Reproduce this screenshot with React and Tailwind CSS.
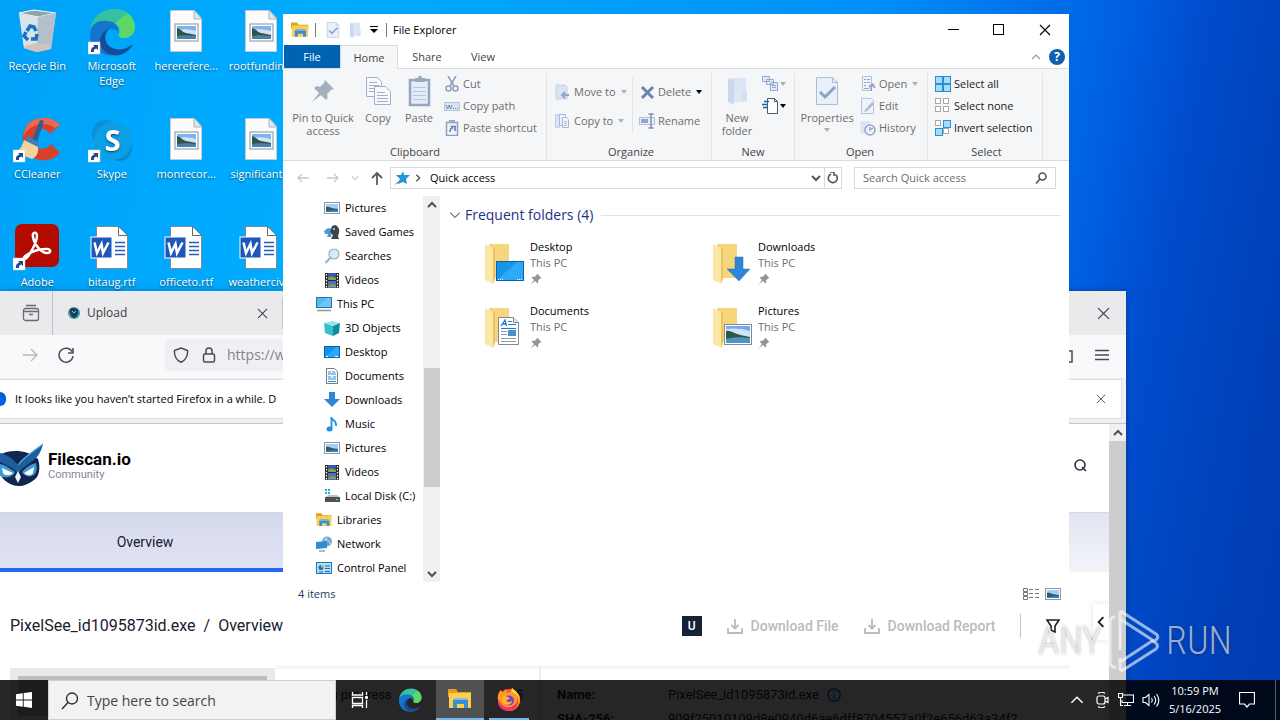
import React from 'react';
import clsx from 'clsx';

/* ---------- small icons ---------- */

const ImagePage = () => (
  <svg viewBox="0 0 48 48" className="h-12 w-12" aria-hidden="true">
    <path d="M8.500 2.500h24l7 8v33h-31z" fill="#fcfcfc" stroke="#c2ccd4" />
    <path d="M32 2v9h8z" fill="#dfe7ec" stroke="#a8b4bd" />
    <rect x="13" y="16" width="23" height="17" fill="#fff" stroke="#7d8f9e" />
    <rect x="15" y="18" width="19" height="13" fill="#7fb2ee" />
    <path d="M15 22c5-1 12-1 19 1v5H15z" fill="#cfe3f5" />
    <path d="M15 20c4 1 5 4 9 5s7 1 10 2v2H15z" fill="#2f5547" />
    <path d="M15 28c6-1 12-1 19 0v3H15z" fill="#4a80a8" />
  </svg>
);

const WordPage = () => (
  <svg viewBox="0 0 48 48" className="h-12 w-12" aria-hidden="true">
    <path d="M8.500 2.500h22l9 9v33h-31z" fill="#fff" stroke="#7d8a96" />
    <path d="M30.500 2.500v9h9" fill="none" stroke="#5d6a76" />
    <path d="M27 18.500h10M27 22.500h10M27 26.500h10M27 30.500h10" stroke="#2b5eb0" strokeWidth="1.500" />
    <rect x="3" y="13" width="21" height="21" fill="#1e57b8" stroke="#fff" />
    <path d="M6.500 18.500l2.500 10.500 4.500-9 1.500 9 5.500-10.500" fill="none" stroke="#fff" strokeWidth="2.500" />
  </svg>
);

const ShortcutArrow = () => (
  <g>
    <rect x="0" y="34" width="12" height="12" fill="#fff" stroke="#c9d4dc" strokeWidth="0.500" />
    <path d="M3 44c-.500-3 1-5 3.500-5.500L5 37h5v5l-1.500-1.500C6 41 5.500 42.500 6 44z" fill="#25478f" />
  </g>
);

const RecycleBin = () => (
  <svg viewBox="0 0 48 48" className="h-12 w-12" aria-hidden="true">
    <path d="M6 5L21 2l22 3-5 36-14 3-13-4z" fill="#c9d3da" />
    <path d="M6 5l19 4 18-4-22-3z" fill="#8fa3ae" stroke="#f4f7f9" strokeWidth="1.200" />
    <path d="M6 5l19 4-1 35-13-4z" fill="#dbe3e8" />
    <path d="M25 9l18-4-5 36-14 3z" fill="#b4c0c9" />
    <path d="M12 38l12-3 14 3-1 3-13 3-13-4z" fill="#d3c3b9" />
    <g fill="none" stroke="#1773c9" strokeWidth="3.500">
      <path d="M14 23l3-5 4 1 2 4" />
      <path d="M24 26l-1 5h-5" />
      <path d="M15 32l-4-4 2-4" />
    </g>
  </svg>
);

const EdgeShape = () => (
  <g>
    <path d="M2 24C3 10 13 1 26 1c12 0 21 8 21 18 0 7-5 11-11 11-4 0-6-2-5-4 2-8-3-12-10-12C12 14 4 17 2 24z" fill="#35c1a0" />
    <path d="M26 1c12 0 21 8 21 18 0 7-5 11-11 11-4 0-6-2-5-4 2-5 0-8-4-10 4-5 8-8 13-10-4-3-9-5-14-5z" fill="#6bdc58" opacity=".75" />
    <path d="M2 24C4 14 12 12 19 13c7 0 12 5 11 11-2-3-5-4-8-3-7 2-8 11-3 17 3 4 7 8 12 9-17 3-30-7-29-23z" fill="#1275ce" />
    <path d="M22 21c-5 2-7 11-1 17 6 5 15 5 24-2-4 8-11 12-19 11-10-1-15-9-14-16 1-5 5-9 10-10z" fill="#164c95" />
  </g>
);

const EdgeIcon = ({ shortcut, className }) => (
  <svg viewBox="0 0 48 48" className={className} aria-hidden="true">
    <EdgeShape />
    {shortcut && <ShortcutArrow />}
  </svg>
);

const CCleaner = () => (
  <svg viewBox="0 0 48 48" className="h-12 w-12" aria-hidden="true">
    <path d="M47 9C40 0 24 0 16 7 8 15 8 30 15 38c8 8 23 9 32-1l-9-9c-4 6-12 6-15 1-4-5-3-12 2-15 4-2 9-1 12 4z" fill="#d8402c" />
    <path d="M47 9C40 0 24 0 16 7c-3 3-5 8-5 12 6-10 20-15 31-7z" fill="#ea6a50" />
    <path d="M27 4l4 1-7 21-5-2z" fill="#2a5f98" />
    <path d="M14 20l12 6-2 6-12-5z" fill="#3b7dbd" />
    <path d="M11 24l14 7c1 6-2 10-6 12L1 36c6-1 8-6 10-12z" fill="#f2d59a" />
    <ShortcutArrow />
  </svg>
);

const Skype = () => (
  <svg viewBox="0 0 48 48" className="h-12 w-12" aria-hidden="true">
    <circle cx="18" cy="18" r="14" fill="#0b8fdc" />
    <circle cx="31" cy="32" r="13" fill="#0a86d2" />
    <circle cx="25" cy="25" r="19" fill="#0c9fe6" />
    <text x="24.500" y="35" textAnchor="middle" fontFamily="Open Sans" fontWeight="700" fontSize="29" fill="#fff">S</text>
    <ShortcutArrow />
  </svg>
);

const Adobe = () => (
  <svg viewBox="0 0 48 48" className="h-12 w-12" aria-hidden="true">
    <rect x="2" y="0" width="44" height="43" rx="7" fill="#b30b00" />
    <path
      d="M12 32c-3 3 0 5 4-1 5-8 8-15 8-19 0-5-5-4-4 1 1 7 8 16 14 16 5 0 4-5-2-4-7 0-14 3-20 7z"
      fill="none" stroke="#fff" strokeWidth="2.400"
    />
    <ShortcutArrow />
  </svg>
);

const PictureIcon = () => (
  <svg viewBox="0 0 16 16" className="h-4 w-4" aria-hidden="true">
    <rect x=".500" y="2.500" width="15" height="11" fill="#fff" stroke="#8b98a3" />
    <rect x="2" y="4" width="12" height="8" fill="#a4cdf5" />
    <path d="M2 7c3-1 5 2 12 2v3H2z" fill="#2f5a6a" />
    <path d="M2 11c4-1 8-1 12-1v2H2z" fill="#3b7cb8" />
  </svg>
);

const GamesIcon = () => (
  <svg viewBox="0 0 16 16" className="h-4 w-4" aria-hidden="true">
    <path d="M0 7l4-3c3 0 4 2 4 4l-1 5H3l1-3H1z" fill="#4c9bd6" />
    <path d="M8 2l3-1c3 1 5 4 4 8l-1 3 1 3H7l2-4-3-3z" fill="#3f4448" />
    <circle cx="10" cy="5" r="1" fill="#d6dde2" />
  </svg>
);

const SearchesIcon = () => (
  <svg viewBox="0 0 16 16" className="h-4 w-4" aria-hidden="true">
    <circle cx="10" cy="6" r="5" fill="#d8ecf8" stroke="#8fb0c4" strokeWidth="1.200" />
    <path d="M6.500 9.500L1.500 15" stroke="#a9b0b6" strokeWidth="2" />
  </svg>
);

const VideosIcon = () => (
  <svg viewBox="0 0 16 16" className="h-4 w-4" aria-hidden="true">
    <rect x="1" y="1" width="14" height="15" fill="#2b2b2b" />
    <rect x="4" y="1" width="8" height="7" fill="#3457b5" />
    <rect x="4" y="9" width="8" height="7" fill="#4a6fd0" />
    <path d="M4 6l3-2 5 2v2H4zM4 14l4-2 4 1v2H4z" fill="#8f9a3c" />
    <path d="M2.500 2v14M13.500 2v14" stroke="#fff" strokeWidth="1.200" strokeDasharray="1.500 1.500" />
  </svg>
);

const PcIcon = () => (
  <svg viewBox="0 0 16 16" className="h-4 w-4" aria-hidden="true">
    <rect x=".500" y="1.500" width="15" height="10" fill="#4fb9f2" stroke="#2d6f9e" />
    <path d="M1 11L11 2h4v9z" fill="#7fd0fa" opacity=".6" />
    <path d="M1 14.500h14" stroke="#8a98a3" strokeWidth="1.500" />
  </svg>
);

const ObjectsIcon = () => (
  <svg viewBox="0 0 16 16" className="h-4 w-4" aria-hidden="true">
    <path d="M0 3l8-2 8 2-7 3z" fill="#9be6ee" />
    <path d="M0 3l9 3v10l-8-3z" fill="#35bfd0" />
    <path d="M9 6l7-3-1 10-6 3z" fill="#138a9e" />
  </svg>
);

const DesktopIcon = () => (
  <svg viewBox="0 0 16 16" className="h-4 w-4" aria-hidden="true">
    <rect x=".500" y="2.500" width="15" height="11" fill="#1492e8" stroke="#0a64ad" />
    <path d="M1 13L12 3h3v10z" fill="#2aa9f8" />
    <path d="M2 12.500h2M11 12.500h3" stroke="#fff" />
  </svg>
);

const DocIcon = () => (
  <svg viewBox="0 0 16 16" className="h-4 w-4" aria-hidden="true">
    <path d="M2.500.500h8l3 3v12h-11z" fill="#fff" stroke="#6f7d88" />
    <path d="M4 4h3M8 4h3M4 6h8M4 9h3M8.500 9H12M4 11h8M4 13.500h8" stroke="#2b87c8" />
  </svg>
);

const DownIcon = () => (
  <svg viewBox="0 0 16 16" className="h-4 w-4" aria-hidden="true">
    <path d="M5 0h6v7h5l-8 8-8-8h5z" fill="#2f87d6" />
  </svg>
);

const MusicIcon = () => (
  <svg viewBox="0 0 16 16" className="h-4 w-4" aria-hidden="true">
    <path d="M7 1c0 3 6 3 5 9M7.500 1v12" fill="none" stroke="#1a94e0" strokeWidth="1.800" />
    <ellipse cx="5.500" cy="13" rx="3" ry="2.500" fill="#1a94e0" />
  </svg>
);

const DiskIcon = () => (
  <svg viewBox="0 0 16 16" className="h-4 w-4" aria-hidden="true">
    <path d="M1 1h2v2H1zM4 1h2v2H4zM1 4h2v2H1zM4 4h2v2H4z" fill="#19b3d6" />
    <path d="M2 9l2-2h9l2 2z" fill="#b9c0c4" />
    <rect x="1" y="9" width="15" height="5" fill="#4b5358" />
    <rect x="12" y="11" width="2" height="1" fill="#5fe36a" />
  </svg>
);

const ExplorerIcon = ({ className }) => (
  <svg viewBox="0 0 24 24" className={className} aria-hidden="true">
    <path d="M0 2h8l2 3h13v5H0z" fill="#e2a021" />
    <path d="M1 6h22v15H1z" fill="#fdcf4d" />
    <path d="M5 21v-8l2-2h11l2 2v8h-4v-4H9v4z" fill="#3b8ed0" />
    <path d="M5 13l2-2h11l2 2z" fill="#7fc0ea" />
  </svg>
);

const NetworkIcon = () => (
  <svg viewBox="0 0 16 16" className="h-4 w-4" aria-hidden="true">
    <circle cx="11" cy="5.500" r="5" fill="#6fa9cd" />
    <path d="M8 3c3 0 6 3 7 5M11 1c-2 3-2 7 0 10" stroke="#d5e9f5" fill="none" strokeWidth=".800" />
    <path d="M0 6l11-1v7L0 13z" fill="#2e8fce" />
    <path d="M3 15h6" stroke="#89a4b5" strokeWidth="1.500" />
  </svg>
);

const ControlIcon = () => (
  <svg viewBox="0 0 16 16" className="h-4 w-4" aria-hidden="true">
    <rect x=".500" y="2.500" width="15" height="11" fill="#aee0f8" stroke="#2678b5" />
    <circle cx="5" cy="7.500" r="2.500" fill="#1f6db0" />
    <path d="M5 7.500V5a2.500 2.500 0 0 1 2.500 2.500z" fill="#f4b93b" />
    <path d="M9 6h5M9 8.500h5M3 12h4M9 11.500h5" stroke="#1f6db0" />
  </svg>
);

const PinIcon = ({ className }) => (
  <svg viewBox="0 0 24 24" className={className} aria-hidden="true">
    <path d="M14 1l9 9-3 1-4 4c1 2 1 4-1 6l-5-5-9 7 7-9-5-5c2-2 4-2 6-1l4-4z" fill="currentColor" />
  </svg>
);

/* ribbon drawings */
const CopyIcon = () => (
  <svg viewBox="0 0 32 32" className="h-8 w-8" aria-hidden="true">
    <g fill="#f7f9fd" stroke="#a3afca">
      <path d="M4.500 2.500h11l4 4v15h-15z" />
      <path d="M7 7.500h8M7 10.500h10M7 13.500h10M7 16.500h10" />
      <path d="M12.500 11.500h11l5 5v13h-16z" />
      <path d="M15 17.500h8M15 20.500h11M15 23.500h11M15 26.500h11" />
    </g>
  </svg>
);

const PasteIcon = () => (
  <svg viewBox="0 0 32 32" className="h-8 w-8" aria-hidden="true">
    <rect x="7" y="5" width="19" height="25" fill="#e6ecf7" stroke="#94a5c4" strokeWidth="2.500" />
    <path d="M12 3h3c0-3 4-3 4 0h3v4H12z" fill="#9ba9bd" />
    <path d="M10 12.500h13M10 16.500h13M10 20.500h13M10 24.500h13" stroke="#b5c3dd" />
  </svg>
);

const CheckPage = ({ className }) => (
  <svg viewBox="0 0 32 32" className={className} aria-hidden="true">
    <path d="M5.500 2.500h16l5 5v22h-21z" fill="#eaf0fa" stroke="#afbcd8" />
    <path d="M21.500 2.500v5h5" fill="none" stroke="#afbcd8" />
    <path d="M9 17l5 5 10-10" fill="none" stroke="#8ca3cb" strokeWidth="3" />
  </svg>
);

const FolderFlat = ({ className }) => (
  <svg viewBox="0 0 32 32" className={className} aria-hidden="true">
    <path d="M10 3h15v24H10z" fill="#dbe5f3" />
    <path d="M7 3l6 3v24l-6-3z" fill="#c9d8ec" />
    <path d="M21 16h5v9h-5z" fill="#d3dff0" />
  </svg>
);

const CutIcon = () => (
  <svg viewBox="0 0 16 16" className="h-4 w-4" fill="none" stroke="#92a1bb" strokeWidth="1.600" aria-hidden="true">
    <path d="M4 0l6 10M12 0L6 10" />
    <circle cx="4.500" cy="12.500" r="2.500" />
    <circle cx="11.500" cy="12.500" r="2.500" />
  </svg>
);

const PathIcon = () => (
  <svg viewBox="0 0 16 16" className="h-4 w-4" aria-hidden="true">
    <rect x=".500" y="4.500" width="15" height="8" fill="#d9e2f2" stroke="#b7c4dd" />
    <path d="M2 7l1.500 4L5 7l1.500 4L8 7M9 10.500h1M11 10.500h1M13 10.500h1" fill="none" stroke="#7589b3" />
  </svg>
);

const PasteShortcutIcon = () => (
  <svg viewBox="0 0 16 16" className="h-4 w-4" aria-hidden="true">
    <rect x="2.500" y="2.500" width="11" height="13" fill="#eff3fa" stroke="#8da0c2" strokeWidth="1.500" />
    <path d="M5 0h6v3H5z" fill="#9ba9c2" />
    <path d="M6 12c0-3 1-4 3-4M6.500 6.500H11V11" fill="none" stroke="#6880b3" strokeWidth="1.700" />
  </svg>
);

const MoveIcon = () => (
  <svg viewBox="0 0 16 16" className="h-4 w-4" aria-hidden="true">
    <path d="M1 1h9l2 2v12H1z" fill="#d9e4f4" stroke="#c2cfe6" />
    <path d="M14 11H8M10 8l-3 3 3 3" fill="none" stroke="#8fa5cd" strokeWidth="2" />
  </svg>
);

const CopyToIcon = () => (
  <svg viewBox="0 0 16 16" className="h-4 w-4" aria-hidden="true">
    <path d="M.500 1.500h4v13h-4z" fill="#d9e4f4" stroke="#c2cfe6" />
    <path d="M4.500 1.500h6v11h-6z" fill="#eef3fb" stroke="#a8b7d6" />
    <path d="M7.500 4.500h4l2 2v8h-6z" fill="#f3f6fc" stroke="#a8b7d6" />
    <path d="M9 8.500h3M9 10.500h3M9 12.500h3" stroke="#a8b7d6" />
  </svg>
);

const DeleteIcon = () => (
  <svg viewBox="0 0 16 16" className="h-4 w-4" aria-hidden="true">
    <path d="M3 3l11 11M14 3L3 14" stroke="#6d84a8" strokeWidth="3" />
  </svg>
);

const RenameIcon = () => (
  <svg viewBox="0 0 16 16" className="h-4 w-4" aria-hidden="true">
    <rect x=".500" y="4.500" width="15" height="7" fill="#e9eff9" stroke="#b0bfdc" />
    <rect x="2" y="6" width="7" height="4" fill="#8fa5cd" />
    <path d="M12 1v14M9.500 1h5M9.500 15h5" stroke="#7e8ea8" strokeWidth="1.500" />
  </svg>
);

const NewItemIcon = () => (
  <svg viewBox="0 0 18 16" className="h-4 w-[18px]" fill="#e2eaf7" stroke="#93a6cc" aria-hidden="true">
    <path d="M.500.500h7v5h-7zM4.500 3.500h7v5h-7zM8.500 6.500h7v8h-7z" />
    <path d="M10 9.500h4M10 11.500h4" />
  </svg>
);

const EasyAccessIcon = () => (
  <svg viewBox="0 0 18 16" className="h-4 w-[18px]" aria-hidden="true">
    <path d="M5.500.500h7l3 3v12h-10z" fill="#fff" stroke="#4f5a66" />
    <path d="M12.500.500v3h3" fill="none" stroke="#4f5a66" />
    <path d="M2 3.500h5M0 6.500h6M1 9.500h4" stroke="#1e5fa8" strokeWidth="1.500" />
  </svg>
);

const OpenIcon = () => (
  <svg viewBox="0 0 16 16" className="h-4 w-4" aria-hidden="true">
    <path d="M2.500.500h9v14h-9z" fill="#eef3fb" stroke="#b5c3dd" />
    <path d="M4 3.500h2M4 6.500h2M4 9.500h2M7 3.500h3M7 6.500h3M4 12.500h5" stroke="#93a6cc" />
    <path d="M11 15c0-3 0-4 1-6M9 11l3.500-3 2.500 4" fill="none" stroke="#93a6cc" strokeWidth="1.800" />
  </svg>
);

const EditIcon = () => (
  <svg viewBox="0 0 16 16" className="h-4 w-4" aria-hidden="true">
    <path d="M1.500.500h10l2 2v13h-12z" fill="#eef3fb" stroke="#b5c3dd" />
    <path d="M5 12l7-8 2 2-7 7-3 1z" fill="#a9bbdb" />
  </svg>
);

const HistoryIcon = () => (
  <svg viewBox="0 0 16 16" className="h-4 w-4" aria-hidden="true">
    <path d="M.500 1h9v13h-9z" fill="#dbe5f3" />
    <circle cx="10" cy="10" r="5" fill="#eef3fb" stroke="#93a6cc" strokeWidth="1.500" />
    <path d="M10 7v3l3-2" fill="none" stroke="#93a6cc" strokeWidth="1.500" />
  </svg>
);

const TILES = [[1, 1], [9, 1], [1, 9], [9, 9]];

const TilesIcon = ({ on, className = 'h-4 w-4' }) => (
  <svg viewBox="0 0 16 16" className={className} aria-hidden="true">
    {TILES.map(([x, y], i) => (
      <rect
        key={i} x={x - 0.5} y={y - 0.5}
        width={on[i] ? 7 : 5} height={on[i] ? 7 : 5}
        fill={on[i] ? '#a6dcfb' : '#fff'} stroke={on[i] ? '#2a8fd0' : '#a9a9a9'}
      />
    ))}
  </svg>
);

const Cross = ({ className }) => (
  <svg viewBox="0 0 12 12" className={className} fill="none" stroke="currentColor" strokeWidth="1.100" aria-hidden="true">
    <path d="M1 1l10 10M11 1L1 11" />
  </svg>
);

const Chevron = ({ dir = 'down', className, stroke = 2 }) => {
  const paths = { down: 'M1 3l4 4 4-4', up: 'M1 7l4-4 4 4', left: 'M7 1L3 5l4 4', right: 'M3 1l4 4-4 4' };
  return (
    <svg viewBox="0 0 10 10" className={className} fill="none" stroke="currentColor" strokeWidth={stroke} aria-hidden="true">
      <path d={paths[dir]} />
    </svg>
  );
};

const Caret = ({ dark }) => (
  <svg viewBox="0 0 6 4" className={clsx('h-1 w-1.5 shrink-0', dark ? 'text-black' : 'text-[#b0b0b0]')} aria-hidden="true">
    <path d="M0 0h6L3 4z" fill="currentColor" />
  </svg>
);

/* ---------- desktop ---------- */

const shortcuts = [
  { label: 'Recycle Bin', icon: <RecycleBin /> },
  { label: 'Microsoft Edge', icon: <EdgeIcon shortcut className="h-12 w-12" /> },
  { label: 'hererefere...', icon: <ImagePage /> },
  { label: 'rootfundin...', icon: <ImagePage /> },
  { label: 'CCleaner', icon: <CCleaner /> },
  { label: 'Skype', icon: <Skype /> },
  { label: 'monrecor...', icon: <ImagePage /> },
  { label: 'significant...', icon: <ImagePage /> },
  { label: 'Adobe', icon: <Adobe /> },
  { label: 'bitaug.rtf', icon: <WordPage /> },
  { label: 'officeto.rtf', icon: <WordPage /> },
  { label: 'weatherciv...', icon: <WordPage /> },
];

const DesktopIcons = () => (
  <div className="grid w-[298px] grid-cols-4 auto-rows-[108px]">
    {shortcuts.map((s) => (
      <button key={s.label} className="flex flex-col items-center justify-start gap-0.5 pt-2 text-center text-[11px] leading-[15px] text-white [text-shadow:0_1px_2px_rgba(0,0,0,0.6)]">
        {s.icon}
        <span className="w-[66px] whitespace-normal">{s.label}</span>
      </button>
    ))}
  </div>
);

/* ---------- browser ---------- */

const OwlLogo = ({ className }) => (
  <svg viewBox="0 0 44 44" className={className} aria-hidden="true">
    <path d="M0 12C8 6 28 6 38 16c3 9 1 18-4 21-6 4-10 6-15 6-9 0-16-6-19-12z" fill="#14264f" />
    <path d="M0 10c8 2 13 6 18 12C24 14 33 8 43 1c-2 9-6 14-12 18l-8 6-5 5-6-5-12-6z" fill="#1d5f9c" />
    <path d="M43 1C34 8 24 14 18 22" fill="none" stroke="#55b4dc" strokeWidth="1.200" />
    <path d="M0 21c5 1 10 4 15 8-2 5-9 7-15 4zM36 20c-5 1-10 4-14 9 3 5 9 6 13 2 2-3 2-7 1-11z" fill="#3c9ad4" />
    <path d="M2 25l11 5c-3 3-8 3-10 0zM34 24l-10 6c3 3 7 3 9 0z" fill="#fff" />
    <path d="M18 28l3 6-3 6-3-6z" fill="#e8f5fc" />
  </svg>
);

const DownloadIcon = () => (
  <svg viewBox="0 0 16 16" className="h-4 w-4" fill="none" stroke="currentColor" strokeWidth="1.800" aria-hidden="true">
    <path d="M1 10v5h14v-5M8 1v9M4.500 7L8 10.500 11.500 7" />
  </svg>
);

const Browser = () => (
  <section aria-label="Firefox" className="absolute bottom-0 left-0 top-[291px] flex w-[88%] flex-col overflow-hidden bg-white shadow-[0_0_6px_rgba(0,0,0,0.3)]">
    <div className="flex h-11 shrink-0 items-center bg-[#eaeaed] text-[#3d3d46]">
      <button aria-label="Firefox View" className="flex h-11 w-[53px] items-center justify-end border-r border-[#c0c0c8] pr-3">
        <svg viewBox="0 0 18 18" className="h-[18px] w-[18px]" fill="none" stroke="#6a6a72" strokeWidth="1.300">
          <path d="M4 1.500h10M1.500 8V6.500a2 2 0 0 1 2-2h11a2 2 0 0 1 2 2V8M1.500 7.500h15v7a2 2 0 0 1-2 2h-11a2 2 0 0 1-2-2zM7 10.500h4" />
        </svg>
      </button>
      <div className="flex h-11 w-[229px] items-center px-3.5 text-xs">
        <svg viewBox="0 0 14 14" className="h-3.5 w-3.5" aria-hidden="true">
          <circle cx="7" cy="7" r="6" fill="#3e9bb0" />
          <path d="M3 3c3-2 6-1 8 1 1 4-1 7-4 8-3-1-5-5-4-9z" fill="#1c3f57" />
          <path d="M5 5l2 2 2-2" stroke="#7fd0e0" fill="none" />
        </svg>
        <span className="ml-1.5 flex-1">Upload</span>
        <button aria-label="Close tab"><Cross className="h-[11px] w-[11px]" /></button>
      </div>
      <div className="my-1 flex-1 self-stretch rounded border border-[#c4c4cc] bg-[#eaeaed]" />
      <button aria-label="Close window" className="ml-4 mr-4 pl-3"><Cross className="h-[13px] w-[13px]" /></button>
    </div>

    <div className="flex h-11 shrink-0 items-center border-b border-[#ececf0] bg-[#f9f9fb] pb-[3px] pr-[17px] text-[#4a4a52]">
      <button aria-label="Forward" className="ml-[22px] text-[#b8b8bd]">
        <svg viewBox="0 0 16 16" className="h-4 w-4" fill="none" stroke="currentColor" strokeWidth="1.400"><path d="M1 8h14M9 2l6 6-6 6" /></svg>
      </button>
      <button aria-label="Reload" className="ml-5">
        <svg viewBox="0 0 16 16" className="h-4 w-4" fill="none" stroke="currentColor" strokeWidth="1.500"><path d="M14 4.500A7 7 0 1 0 15 9M15 1v5h-5" /></svg>
      </button>
      <div className="ml-[91px] flex h-8 flex-1 items-center gap-3 rounded bg-[#f0f0f4] pl-2">
        <svg viewBox="0 0 16 16" className="h-4 w-4 shrink-0" fill="none" stroke="currentColor" strokeWidth="1.500"><path d="M8 1l6.500 2.500C15 9 12 13.500 8 15.300 4 13.500 1 9 1.500 3.500z" /></svg>
        <svg viewBox="0 0 16 16" className="h-4 w-4 shrink-0" fill="none" stroke="currentColor" strokeWidth="1.500"><rect x="2.500" y="7" width="11" height="8" rx="1.500" /><path d="M5 7V4a3 3 0 0 1 6 0v3" /></svg>
        <input aria-label="Address" defaultValue="https://www" className="-ml-0.5 min-w-0 flex-1 bg-transparent text-sm text-[#84848c] outline-none" />
      </div>
      <button aria-label="Extensions" className="ml-3">
        <svg viewBox="0 0 16 16" className="h-4 w-4" fill="none" stroke="currentColor" strokeWidth="1.500"><path d="M1 4h14v11H1z" /></svg>
      </button>
      <button aria-label="Menu" className="ml-[22px]">
        <svg viewBox="0 0 14 12" className="h-3 w-3.5" stroke="currentColor" strokeWidth="1.300"><path d="M0 1.500h14M0 6h14M0 10.500h14" /></svg>
      </button>
    </div>

    <div className="h-[45px] shrink-0 border-b border-[#c4c4c8] bg-[#f0f0f4] pb-1 pr-1">
      <div className="flex h-10 items-center border border-l-0 border-[#dcdce2] bg-white text-[11px] text-black">
        <span className="h-3.5 w-1.5 rounded-r-full bg-[#0060df]" />
        <span className="ml-[9px] flex-1">It looks like you haven’t started Firefox in a while. D</span>
        <button aria-label="Dismiss" className="mr-[15px] text-[#4a4a52]"><Cross className="h-2.5 w-2.5" /></button>
      </div>
    </div>

    <div className="flex min-h-0 flex-1 font-[Roboto,sans-serif]">
      <div className="flex min-w-0 flex-1 flex-col text-[#16202e]">
        <header className="flex h-[88px] shrink-0 items-center bg-white pb-1.5 pr-[22px]">
          <OwlLogo className="h-11 w-11 shrink-0" />
          <div className="ml-1 flex-1">
            <div className="text-[17px] font-bold leading-5 text-black">Filescan.io</div>
            <div className="text-[11px] leading-3 text-[#7d8898]">Community</div>
          </div>
          <button aria-label="Search">
            <svg viewBox="0 0 14 14" className="h-3.5 w-3.5" fill="none" stroke="#2b3442" strokeWidth="1.600"><circle cx="7" cy="7" r="5" /><path d="M9 9l4 4" /></svg>
          </button>
        </header>
        <nav className="flex h-[60px] shrink-0 border-t border-[#d2d6e4] bg-linear-to-b from-[#e2e5f0] to-[#f3f4fa]">
          <a href="#overview" className="flex w-[290px] items-center justify-center border-b-4 border-[#2468f6] bg-linear-to-b from-[#d3d8ea] via-[#dbdff1] to-[#dde1f3] pt-[3px] text-sm">Overview</a>
        </nav>
        <div className="flex h-[93px] shrink-0 items-start pl-2.5 pt-8">
          <div className="flex h-11 flex-1 items-center text-base">
            <a href="#file">PixelSee_id1095873id.exe</a>
            <span className="mx-2">/</span>
            <span>Overview</span>
          </div>
          <div className="flex h-11 items-center gap-[25px] text-sm font-medium text-[#b9bbbf]">
            <span className="flex h-5 w-5 items-center justify-center bg-[#152238] text-xs text-white">U</span>
            <button className="flex items-center gap-2"><DownloadIcon />Download File</button>
            <button className="flex items-center gap-2"><DownloadIcon />Download Report</button>
            <span className="h-6 border-l border-[#c4c6ca]" />
            <button aria-label="Filter">
              <svg viewBox="0 0 14 14" className="h-3.5 w-3.5" fill="none" stroke="#16202e" strokeWidth="1.600"><path d="M1 1h12L9 7v6l-4-2V7z" /></svg>
            </button>
          </div>
          <button aria-label="Open panel" className="ml-[33px] flex h-9 w-4 items-center justify-center bg-white shadow-[0_0_6px_rgba(0,0,0,0.12)]">
            <Chevron dir="left" className="h-3 w-3" stroke={1.5} />
          </button>
        </div>
        <div className="flex h-14 shrink-0 pl-2.5">
          <div className="mt-[3px] w-[265px] bg-[#e9e9ea] px-2 pt-2"><div className="h-10 bg-[#bdbdc1]" /></div>
          <div className="flex w-[266px] items-start justify-between border-r-2 border-t-4 border-[#ececee] border-t-[#f6f6f7] px-4 pt-[18px] text-[13px] leading-4">
            <span>Loading progress</span>
            <span>44.5</span>
          </div>
          <dl className="mr-10 grid flex-1 grid-cols-[111px_1fr] content-start gap-y-2 border-t-4 border-[#f6f6f7] pl-4 pt-[18px] text-[13px] leading-4">
            <dt className="font-bold">Name:</dt>
            <dd className="flex items-center gap-2">
              PixelSee_id1095873id.exe
              <svg viewBox="0 0 16 16" className="h-3.5 w-3.5" fill="none" stroke="#1b87e5" strokeWidth="2"><circle cx="8" cy="8" r="7" /><path d="M8 3.500v2M8 7v5" /></svg>
            </dd>
            <dt className="font-bold">SHA-256:</dt>
            <dd className="whitespace-nowrap">909f25010109d8e0940d6ae6dff8704557a0f2e656d63a34f2</dd>
          </dl>
        </div>
      </div>
      <div className="flex w-[17px] shrink-0 flex-col bg-[#f0f0f0]">
        <button aria-label="Scroll up" className="flex h-[17px] items-center justify-center text-[#505050]"><Chevron dir="up" className="h-2.5 w-2.5" /></button>
        <div className="flex-1 bg-[#cdcdcd]" />
      </div>
    </div>
  </section>
);

/* ---------- file explorer ---------- */

const BigButton = ({ icon, label, caret, className }) => (
  <button className={clsx('flex flex-col items-center text-center leading-[13px] text-[#6d6d6d]', className)}>
    <span className="mb-1.5 flex h-8 items-center pt-1">{icon}</span>
    <span>{label}</span>
    {caret && <span className="mt-1"><Caret /></span>}
  </button>
);

const SmallButton = ({ icon, label, caret, dark, active }) => (
  <button className={clsx('flex h-[22px] items-center gap-[3px] whitespace-nowrap', active ? 'text-[#1a1a1a]' : 'text-[#6d6d6d]')}>
    {icon}
    <span>{label}</span>
    {caret && <span className="ml-0.5 flex"><Caret dark={dark} /></span>}
  </button>
);

const Group = ({ title, className, children }) => (
  <div className={clsx('flex shrink-0 flex-col border-r border-[#e2e3e4]', className)}>
    <div className="flex flex-1 items-start">{children}</div>
    <div className="-ml-1 text-center leading-[17px] text-[#444]">{title}</div>
  </div>
);

const Ribbon = () => (
  <div className="flex h-[92px] shrink-0 border-b border-[#dadbdc] bg-[#f5f6f7] pl-px pt-1">
    <Group title="Clipboard" className="w-[263px] pl-1">
      <BigButton className="w-[70px]" label="Pin to Quick access" icon={<PinIcon className="h-6 w-6 text-[#a5afc0]" />} />
      <BigButton className="w-10" label="Copy" icon={<CopyIcon />} />
      <BigButton className="w-[42px]" label="Paste" icon={<PasteIcon />} />
      <div className="ml-1">
        <SmallButton label="Cut" icon={<CutIcon />} />
        <SmallButton label="Copy path" icon={<PathIcon />} />
        <SmallButton label="Paste shortcut" icon={<PasteShortcutIcon />} />
      </div>
    </Group>
    <Group title="Organize" className="w-[165px] pl-2">
      <div className="flex w-[77px] flex-col gap-[7px] pt-2">
        <SmallButton label="Move to" caret icon={<MoveIcon />} />
        <SmallButton label="Copy to" caret icon={<CopyToIcon />} />
      </div>
      <div className="mt-1 flex h-14 flex-col gap-[7px] border-l border-[#e2e3e4] pl-1.5 pt-1">
        <SmallButton label="Delete" caret dark icon={<DeleteIcon />} />
        <SmallButton label="Rename" icon={<RenameIcon />} />
      </div>
    </Group>
    <Group title="New" className="w-[83px] pl-1">
      <BigButton className="w-[42px]" label="New folder" icon={<FolderFlat className="h-8 w-8" />} />
      <div className="ml-1">
        <button aria-label="New item" className="flex h-[22px] items-center"><NewItemIcon /><Caret /></button>
        <button aria-label="Easy access" className="flex h-[22px] items-center"><EasyAccessIcon /><Caret dark /></button>
      </div>
    </Group>
    <Group title="Open" className="w-[133px] pl-0.5">
      <BigButton className="w-[60px]" label="Properties" caret icon={<CheckPage className="h-8 w-8" />} />
      <div className="ml-[3px]">
        <SmallButton label="Open" caret icon={<OpenIcon />} />
        <SmallButton label="Edit" icon={<EditIcon />} />
        <SmallButton label="History" icon={<HistoryIcon />} />
      </div>
    </Group>
    <Group title="Select" className="w-[115px] pl-[7px]">
      <div>
        <SmallButton active label="Select all" icon={<TilesIcon on={[1, 1, 1, 1]} />} />
        <SmallButton active label="Select none" icon={<TilesIcon on={[0, 0, 0, 0]} />} />
        <SmallButton active label="Invert selection" icon={<TilesIcon on={[0, 1, 1, 0]} />} />
      </div>
    </Group>
  </div>
);

const tree = [
  { label: 'Pictures', icon: <PictureIcon />, deep: true },
  { label: 'Saved Games', icon: <GamesIcon />, deep: true },
  { label: 'Searches', icon: <SearchesIcon />, deep: true },
  { label: 'Videos', icon: <VideosIcon />, deep: true },
  { label: 'This PC', icon: <PcIcon /> },
  { label: '3D Objects', icon: <ObjectsIcon />, deep: true },
  { label: 'Desktop', icon: <DesktopIcon />, deep: true },
  { label: 'Documents', icon: <DocIcon />, deep: true },
  { label: 'Downloads', icon: <DownIcon />, deep: true },
  { label: 'Music', icon: <MusicIcon />, deep: true },
  { label: 'Pictures', icon: <PictureIcon />, deep: true },
  { label: 'Videos', icon: <VideosIcon />, deep: true },
  { label: 'Local Disk (C:)', icon: <DiskIcon />, deep: true },
  { label: 'Libraries', icon: <ExplorerIcon className="h-4 w-4" /> },
  { label: 'Network', icon: <NetworkIcon /> },
  { label: 'Control Panel', icon: <ControlIcon /> },
];

const overlays = {
  Desktop: (
    <g>
      <rect x="11.500" y="20.500" width="27" height="19" fill="#1495ea" stroke="#0c62a6" />
      <path d="M12 39L32 21h6v18z" fill="#2caaf8" />
      <path d="M13 38.500h6M32 38.500h5" stroke="#fff" strokeDasharray="1 1" />
    </g>
  ),
  Downloads: <path d="M22 16h8v12h7L26 40 14 28h8z" fill="#2f86d4" stroke="#2470b8" strokeWidth=".500" />,
  Documents: (
    <g>
      <path d="M13.500 12.500h15l5 5v22h-20z" fill="#fff" stroke="#7f8a94" />
      <path d="M28.500 12.500v5h5" fill="#e3e8ec" stroke="#7f8a94" />
      <path d="M16 21l4-6 1.500 6M18 19h3" fill="none" stroke="#1e7cc4" strokeWidth="1.300" />
      <path d="M23 16.500h4M23 19.500h8M16 23.500h15" stroke="#1e7cc4" />
      <rect x="23" y="25" width="8" height="6" fill="#4d8fc7" />
      <path d="M16 26.500h6M16 29.500h6M16 33.500h15M16 36.500h15" stroke="#8d9aa5" />
    </g>
  ),
  Pictures: (
    <g>
      <rect x="11.500" y="19.500" width="27" height="20" fill="#fff" stroke="#7f8a94" />
      <rect x="13" y="21" width="24" height="17" fill="#6fa9ee" />
      <path d="M13 24c6-1 16-1 24 2v8H13z" fill="#cfe4f8" />
      <path d="M13 26c5-1 9 4 24 6v6H13z" fill="#2d5548" />
      <path d="M13 34c8-2 16-2 24-1v5H13z" fill="#4f94c4" />
    </g>
  ),
};

const FolderIcon = ({ name }) => (
  <svg viewBox="0 0 40 44" className="mt-0.5 h-11 w-10 shrink-0" aria-hidden="true">
    <path d="M4 3h20v34H4z" fill="#f5d67c" />
    <path d="M0 3l8 4v36l-8-4z" fill="#fce7a4" />
    <path d="M8 7l2 1v30l-2 5z" fill="#e9c465" />
    {overlays[name]}
  </svg>
);

const Explorer = () => (
  <section aria-label="File Explorer" className="absolute left-[283px] top-3.5 flex h-[592px] w-[786px] flex-col bg-white text-[11px] leading-4 text-black">
    <div className="flex h-[31px] shrink-0 items-center pl-2">
      <ExplorerIcon className="h-[18px] w-[18px]" />
      <span className="ml-1.5 h-3.5 border-l border-[#777]" />
      <CheckPage className="ml-2 h-[18px] w-[18px]" />
      <FolderFlat className="ml-1 h-[18px] w-[18px]" />
      <svg viewBox="0 0 8 8" className="ml-1.5 h-2 w-2" aria-hidden="true"><path d="M0 .500h8" stroke="#000" /><path d="M0 3h8L4 7z" /></svg>
      <span className="ml-2 h-3.5 border-l border-[#777]" />
      <h1 className="ml-1.5 flex-1">File Explorer</h1>
      <button aria-label="Minimize" className="flex h-full w-[45px] items-center justify-center"><span className="w-[11px] border-t border-black" /></button>
      <button aria-label="Maximize" className="flex h-full w-[45px] items-center justify-center"><span className="h-[11px] w-[11px] border border-black" /></button>
      <button aria-label="Close" className="flex h-full w-12 items-center justify-center"><Cross className="h-3 w-3" /></button>
    </div>

    <div className="flex h-6 shrink-0 items-stretch border-b border-[#dadbdc] pl-px">
      <button className="w-14 bg-[#0063b1] text-white">File</button>
      <button className="-mb-px w-[58px] border border-b-0 border-[#dadbdc] bg-[#f5f6f7] text-[#444]">Home</button>
      <button className="w-[58px] text-[#444]">Share</button>
      <button className="w-[54px] text-[#444]">View</button>
      <span className="flex-1" />
      <button aria-label="Collapse ribbon" className="mr-2 text-[#999]"><Chevron dir="up" className="h-2.5 w-2.5" stroke={1.2} /></button>
      <button aria-label="Help" className="mr-1 h-4 w-4 self-center rounded-full bg-[#0f60b0] text-center text-xs font-bold leading-4 text-white">?</button>
    </div>

    <Ribbon />

    <div className="flex h-[35px] shrink-0 items-center pb-px pl-3.5 pr-[13px]">
      <button aria-label="Back" className="text-[#c8c8c8]">
        <svg viewBox="0 0 12 12" className="h-3 w-3" fill="none" stroke="currentColor" strokeWidth="1.300"><path d="M12 6H1M5 2L1 6l4 4" /></svg>
      </button>
      <button aria-label="Forward" className="ml-[18px] text-[#c8c8c8]">
        <svg viewBox="0 0 12 12" className="h-3 w-3" fill="none" stroke="currentColor" strokeWidth="1.300"><path d="M0 6h11M7 2l4 4-4 4" /></svg>
      </button>
      <button aria-label="Recent locations" className="ml-3 text-[#c8c8c8]"><Chevron className="h-2 w-2" stroke={1.5} /></button>
      <button aria-label="Up" className="ml-[11px] text-[#5c5c5c]">
        <svg viewBox="0 0 14 14" className="h-3.5 w-3.5" fill="none" stroke="currentColor" strokeWidth="1.800"><path d="M7 14V2M2 7l5-5 5 5" /></svg>
      </button>
      <div className="ml-1.5 flex h-[22px] flex-1 items-center border border-[#d9d9d9] pl-[3px]">
        <svg viewBox="0 0 16 16" className="h-4 w-4" aria-hidden="true"><path d="M9 1l1 4h6l-4 4 1 5-4-2-5 2 2-5-4-4h5z" fill="#1e96dc" /><path d="M6 10l-6 5 7-3z" fill="#75838e" /></svg>
        <Chevron dir="right" className="ml-1 h-2 w-2 text-[#555]" stroke={1.8} />
        <button className="ml-2 flex-1 text-left">Quick access</button>
        <button aria-label="Previous locations" className="mr-[3px] text-[#555]"><Chevron className="h-2.5 w-2.5" /></button>
        <button aria-label="Refresh" className="flex h-full w-[17px] items-center justify-center border-l border-[#d9d9d9] text-[#555]">
          <svg viewBox="0 0 12 12" className="h-3 w-3" fill="none" stroke="currentColor" strokeWidth="1.600"><path d="M8.500 2.500A4.500 4.500 0 1 1 4 2M3 0h4v4" /></svg>
        </button>
      </div>
      <label className="ml-3 flex h-[22px] w-[202px] items-center border border-[#d9d9d9] px-2">
        <input aria-label="Search Quick access" placeholder="Search Quick access" className="min-w-0 flex-1 outline-none placeholder:text-[#6d6d6d]" />
        <svg viewBox="0 0 12 12" className="h-3 w-3" fill="none" stroke="#555" strokeWidth="1.600"><circle cx="7.500" cy="4.500" r="3.500" /><path d="M5 7L1 11.500" /></svg>
      </label>
    </div>

    <div className="flex min-h-0 flex-1">
      <ul className="w-[140px] shrink-0">
        {tree.map((node, i) => (
          <li key={i}>
            <a href="#tree" className={clsx('flex h-6 items-center gap-[5px] whitespace-nowrap', node.deep ? 'pl-[41px]' : 'pl-[33px]')}>
              <span className="shrink-0">{node.icon}</span>
              {node.label}
            </a>
          </li>
        ))}
      </ul>
      <div className="flex w-[17px] shrink-0 flex-col items-center bg-[#f0f0f0] text-[#505050]">
        <Chevron dir="up" className="my-1 h-2.5 w-2.5 shrink-0" />
        <div className="mt-[154px] h-[119px] w-4 bg-[#cdcdcd]" />
        <Chevron className="mb-[3px] mt-auto h-2.5 w-2.5 shrink-0" />
      </div>
      <main className="flex-1 pl-[9px] pr-2 pt-2">
        <div className="flex h-[22px] items-center">
          <Chevron className="h-3 w-3 text-[#777]" stroke={1} />
          <h2 className="ml-1 text-sm text-[#1e3287]">Frequent folders (4)</h2>
          <span className="ml-2 flex-1 border-t border-[#e2e2e2]" />
        </div>
        <ul className="grid grid-cols-[228px_228px] pl-9 pt-[11px]">
          {['Desktop', 'Downloads', 'Documents', 'Pictures'].map((name) => (
            <li key={name} className="flex h-16 items-start gap-[5px] pt-0.5">
              <FolderIcon name={name} />
              <div>
                <div>{name}</div>
                <div className="text-[#6d6d6d]">This PC</div>
                <PinIcon className="mt-0.5 h-3 w-3 text-[#8c979c]" />
              </div>
            </li>
          ))}
        </ul>
      </main>
    </div>

    <footer className="flex h-6 shrink-0 items-center pl-[15px] pr-2 text-[#1e395b]">
      <span className="flex-1">4 items</span>
      <button aria-label="Details view">
        <svg viewBox="0 0 16 14" className="h-3.5 w-4" fill="none" stroke="#777"><path d="M.500 1.500h4v3h-4zM.500 5.500h4v3h-4zM.500 9.500h4v3h-4zM6 2.500h4M6 6.500h4M6 10.500h4M12 2.500h4M12 6.500h4M12 10.500h4" /></svg>
      </button>
      <button aria-label="Large icons view" className="ml-1.5"><PictureIcon /></button>
    </footer>
  </section>
);

/* ---------- taskbar ---------- */

const FirefoxIcon = () => (
  <svg viewBox="0 0 24 24" className="h-6 w-6" aria-hidden="true">
    <circle cx="12" cy="13" r="11" fill="#ff5a36" />
    <path d="M1 13C0 8 2 5 4 3l2 3 3-4 1 4c4 0 4-3 5-5 3 3 8 6 8 12 0 6-5 11-11 11z" fill="#ff9a22" />
    <path d="M15 1c3 3 8 6 8 12-1-4-3-6-6-7-2-1-3-3-2-5z" fill="#ffe23f" />
    <path d="M1 12c2 8 9 10 15 7 4-2 5-6 4-9 3 7-1 14-8 14C5 24 0 19 1 12z" fill="#f5306e" />
    <circle cx="12" cy="13.500" r="5" fill="#7a3fd0" />
    <path d="M6 10c3-2 5 1 7 1-1 2-3 1-4 3 2 2 6 1 6-1 1 5-7 7-10 1z" fill="#ffb52e" />
  </svg>
);

const Taskbar = () => (
  <footer className="absolute inset-x-0 bottom-0 flex h-10 items-stretch bg-black/85 text-white">
    <button aria-label="Start" className="flex w-12 items-center justify-center">
      <svg viewBox="0 0 16 16" className="h-4 w-4" fill="#fff"><path d="M0 2.200l6.800-1v6.300H0zM7.700 1.100L16 0v7.500H7.700zM0 8.400h6.800v6.300L0 13.800zM7.700 8.400H16V16l-8.300-1.200z" /></svg>
    </button>
    <label className="flex w-72 items-center gap-2 border border-[#cfcfcf] bg-[#f2f2f2] px-3 pt-0.5 text-[#333]">
      <svg viewBox="0 0 18 18" className="h-[18px] w-[18px] shrink-0" fill="none" stroke="#222" strokeWidth="1.300"><circle cx="11" cy="6.500" r="5.500" /><path d="M7 10.500L1 17" /></svg>
      <input aria-label="Search" placeholder="Type here to search" className="min-w-0 flex-1 bg-transparent text-sm outline-none placeholder:text-[#444]" />
    </label>
    <button aria-label="Task view" className="flex w-12 items-center justify-center">
      <svg viewBox="0 0 18 16" className="h-4 w-[18px]" fill="none" stroke="#fff" strokeWidth="1.300"><path d="M1.500 0v3h10V0M1.500 5.500h10v6h-10zM1.500 16v-2.500h10V16M15.500 0v3M15.500 8v8" /><circle cx="15.500" cy="5.500" r="1" fill="#fff" /></svg>
    </button>
    <button aria-label="Microsoft Edge" className="flex w-[52px] items-center justify-center"><EdgeIcon className="h-6 w-6" /></button>
    <button aria-label="File Explorer" className="flex w-12 items-center justify-center border-b-2 border-[#76b9ed] bg-white/20"><ExplorerIcon className="h-6 w-6" /></button>
    <button aria-label="Firefox" className="ml-[5px] flex w-10 items-center justify-center border-b-2 border-[#76b9ed]"><FirefoxIcon /></button>
    <span className="flex-1" />
    <div className="flex items-center gap-2">
      <button aria-label="Show hidden icons"><Chevron dir="up" className="h-3.5 w-3.5" stroke={1} /></button>
      <svg viewBox="0 0 16 16" className="ml-0.5 h-4 w-4" fill="none" stroke="#fff" strokeWidth="1.200" aria-hidden="true"><rect x="3" y="4" width="8" height="8" rx="2" /><path d="M11 7l3-1.500v5L11 9M4 1.500c2-1.500 5-1.500 7 0M4 14.500c2 1.500 5 1.500 7 0" /></svg>
      <svg viewBox="0 0 16 16" className="h-4 w-4" fill="none" stroke="#fff" strokeWidth="1.100" aria-hidden="true"><path d="M5 3h10.500v7.500H4V8M6 13.500h7M9.500 10.500v3M.500 1.500h4v4h-4zM2.500 5.500v8H5" /></svg>
      <svg viewBox="0 0 18 16" className="h-4 w-[18px]" fill="none" stroke="#fff" strokeWidth="1.100" aria-hidden="true"><path d="M1 5.500h2.500L7 2.500v11l-3.500-3H1zM9.500 6c1 1.500 1 3 0 4.500M12 4c2 2.500 2 6 0 8.500M14.500 2c3 4 3 8.500 0 12.500" /></svg>
    </div>
    <div className="flex w-[70px] flex-col justify-center text-center text-[11px] leading-[18px]">
      <span>10:59 PM</span>
      <span>5/16/2025</span>
    </div>
    <button aria-label="Notifications" className="flex w-[34px] items-center justify-center">
      <svg viewBox="0 0 16 16" className="h-4 w-4" fill="none" stroke="#fff" strokeWidth="1.200"><path d="M.500.500h15v11.500h-5L8 15l-2.500-3h-5z" /></svg>
    </button>
    <span className="ml-[11px] mr-1 border-l border-[#5a5f68]" />
  </footer>
);

const Watermark = () => (
  <div className="pointer-events-none absolute bottom-12 right-12 flex items-center gap-1 font-['Roboto_Condensed','Liberation_Sans_Narrow','Roboto',sans-serif] text-[38px] font-light leading-[60px] text-white/60 [text-shadow:0_0_3px_rgba(0,0,0,0.35)]">
    <span>ANY</span>
    <svg viewBox="0 0 56 62" className="h-[62px] w-14" fill="none" stroke="#fff" strokeOpacity=".6" strokeWidth="3" strokeLinejoin="round" aria-hidden="true">
      <path d="M4 52V12q0-5 5-5M4 52q0 6 6 5" />
      <path d="M14 40V3q0-2 2-1l34 22q3 2 1 5l-3 2L14 9" />
      <path d="M14 48v10q0 3 3 2l33-21q3-3 0-6l-4-2-32 21" />
    </svg>
    <span>RUN</span>
  </div>
);

export default function App() {
  return (
    <div className="relative h-screen w-full overflow-hidden bg-[linear-gradient(100deg,#00a2f8_0%,#00acff_24%,#0090f8_62%,#0060e2_80%,#004ccc_86%,#0040b8_94%,#003cb0_100%)] font-['Open_Sans',sans-serif]">
      <DesktopIcons />
      <Browser />
      <Explorer />
      <Taskbar />
      <Watermark />
    </div>
  );
}
